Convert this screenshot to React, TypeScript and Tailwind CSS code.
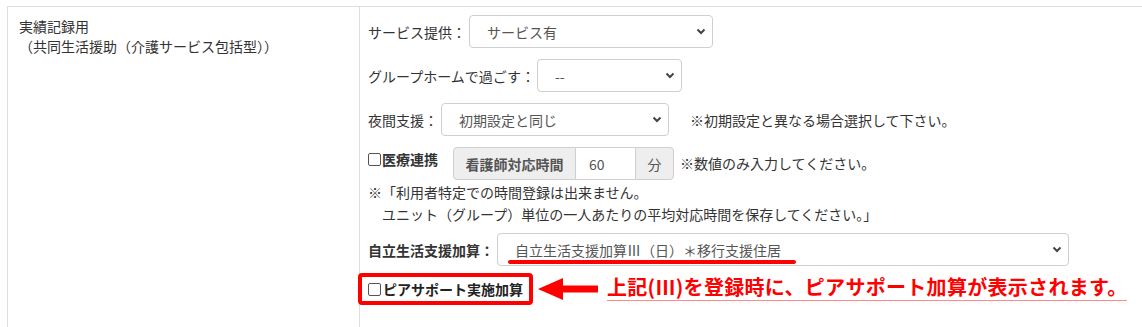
const font = { fontFamily: '"Noto Sans CJK JP", "Noto Sans", sans-serif' };

function Chevron() {
  return (
    <svg width="10" height="7" viewBox="0 0 10 7" className="shrink-0">
      <path d="M1.5 1.5 L5 5 L8.5 1.5" fill="none" stroke="#444" strokeWidth="2" />
    </svg>
  );
}

function FakeSelect({ value, className }: { value: string; className: string }) {
  return (
    <div
      className={`flex h-[33px] items-center justify-between rounded-[4px] border border-[#cfcfcf] bg-white pl-[17px] pr-[6px] text-[14px] text-[#555] ${className}`}
    >
      <span>{value}</span>
      <Chevron />
    </div>
  );
}

function Check() {
  return <span className="inline-block h-[13px] w-[13px] shrink-0 rounded-[2px] border border-[#555] bg-white" />;
}

export default function App() {
  return (
    <div className="h-[327px] w-[1142px] overflow-hidden bg-white pl-[7px] pt-[6px] text-[14px] leading-[20px] text-[#333]" style={font}>
      <div className="flex h-full border-l border-t border-[#dedede]">
        {/* left cell */}
        <div className="w-[352px] shrink-0 border-r border-[#dedede] pl-[11px] pt-[9px]">
          <div>実績記録用</div>
          <div>（共同生活援助（介護サービス包括型））</div>
        </div>

        {/* right cell */}
        <div className="flex flex-1 flex-col pl-[8px] pt-[8px]">
          <div className="flex items-center">
            <span>サービス提供：</span>
            <FakeSelect value="サービス有" className="ml-[3px] w-[244px]" />
          </div>

          <div className="mt-[11px] flex items-center">
            <span>グループホームで過ごす：</span>
            <FakeSelect value="--" className="ml-[2px] w-[145px]" />
          </div>

          <div className="mt-[11px] flex items-center">
            <span>夜間支援：</span>
            <FakeSelect value="初期設定と同じ" className="ml-[3px] w-[228px]" />
            <span className="ml-[21px]">※初期設定と異なる場合選択して下さい。</span>
          </div>

          <div className="mt-[11px] flex items-start">
            <label className="mt-[2px] flex items-center gap-[1px] font-bold">
              <Check />
              <span>医療連携</span>
            </label>
            <div className="ml-[15px] flex h-[33px]">
              <span className="flex w-[123px] items-center justify-center rounded-l-[4px] border border-[#cfcfcf] bg-[#eeeeee] font-bold text-[#555]">
                看護師対応時間
              </span>
              <span className="flex w-[59px] items-center border-y border-[#cfcfcf] bg-white pl-[13px] text-[#555]">60</span>
              <span className="flex w-[39px] items-center justify-center rounded-r-[4px] border border-[#cfcfcf] bg-[#eeeeee] text-[#555]">
                分
              </span>
            </div>
            <span className="ml-[6px] mt-[6px]">※数値のみ入力してください。</span>
          </div>

          <div className="mt-[1px] leading-[22px]">
            <div>※「利用者特定での時間登録は出来ません。</div>
            <div>　ユニット（グループ）単位の一人あたりの平均対応時間を保存してください。」</div>
          </div>

          <div className="relative mt-[8px] flex items-center">
            <span className="font-bold">自立生活支援加算：</span>
            <FakeSelect value="自立生活支援加算Ⅲ（日）＊移行支援住居" className="ml-[3px] w-[572px]" />
            <span className="absolute left-[140px] top-[27px] h-[4px] w-[288px] rounded-full bg-[#ff0000]" />
          </div>

          <div className="mt-[7px] flex items-center">
            <div className="-ml-[10px] flex h-[32px] w-[175px] items-center rounded-[4px] border-[4px] border-[#ff0000] pl-[6px] font-bold text-[#222]">
              <Check />
              <span className="ml-[2px]">ピアサポート実施加算</span>
            </div>
            <svg width="62" height="24" viewBox="0 0 62 24" className="ml-[5px]">
              <polygon points="0,12 25,1 25,23" fill="#ff0000" />
              <rect x="24" y="8.5" width="36" height="7" fill="#ff0000" />
            </svg>
            <span className="-mt-[3px] ml-[7px] w-[520px] shrink-0 whitespace-nowrap border-b border-[#ff8a8a] text-[20px] font-bold leading-[26px] tracking-[0.3px] text-[#ff0000]">
              上記(Ⅲ)を登録時に、ピアサポート加算が表示されます。
            </span>
          </div>
        </div>
      </div>
    </div>
  );
}
